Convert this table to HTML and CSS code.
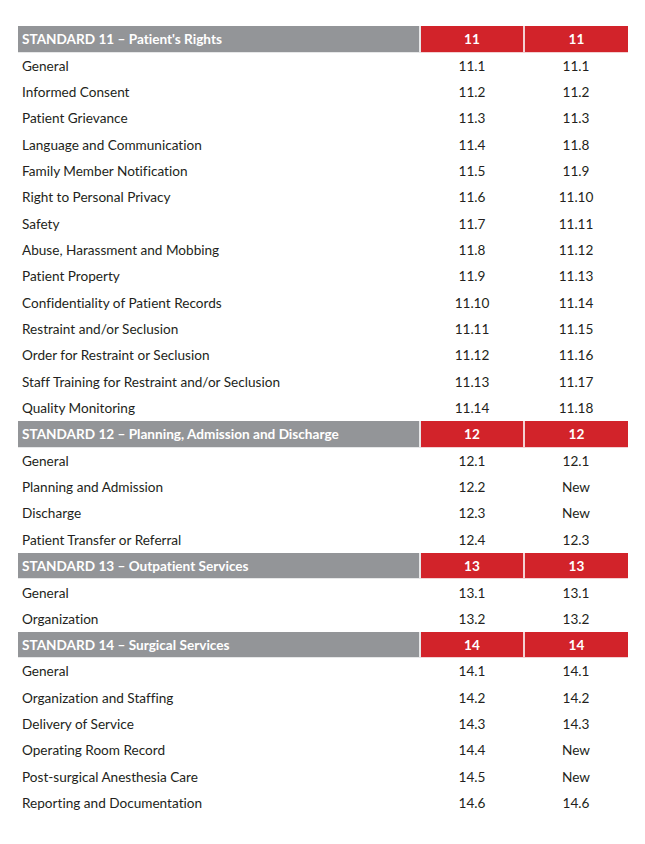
FILE: index.html
```html
<!DOCTYPE html>
<html lang="en">
<head>
<meta charset="utf-8">
<title>Standards</title>
<link rel="stylesheet" href="styles.css">
</head>
<body>
<table class="std">
  <tbody>
    <tr class="head"><td class="name">STANDARD 11 – Patient's Rights</td><td class="num">11</td><td class="num">11</td></tr>
    <tr><td class="name">General</td><td class="num">11.1</td><td class="num">11.1</td></tr>
    <tr><td class="name">Informed Consent</td><td class="num">11.2</td><td class="num">11.2</td></tr>
    <tr><td class="name">Patient Grievance</td><td class="num">11.3</td><td class="num">11.3</td></tr>
    <tr><td class="name">Language and Communication</td><td class="num">11.4</td><td class="num">11.8</td></tr>
    <tr><td class="name">Family Member Notification</td><td class="num">11.5</td><td class="num">11.9</td></tr>
    <tr><td class="name">Right to Personal Privacy</td><td class="num">11.6</td><td class="num">11.10</td></tr>
    <tr><td class="name">Safety</td><td class="num">11.7</td><td class="num">11.11</td></tr>
    <tr><td class="name">Abuse, Harassment and Mobbing</td><td class="num">11.8</td><td class="num">11.12</td></tr>
    <tr><td class="name">Patient Property</td><td class="num">11.9</td><td class="num">11.13</td></tr>
    <tr><td class="name">Confidentiality of Patient Records</td><td class="num">11.10</td><td class="num">11.14</td></tr>
    <tr><td class="name">Restraint and/or Seclusion</td><td class="num">11.11</td><td class="num">11.15</td></tr>
    <tr><td class="name">Order for Restraint or Seclusion</td><td class="num">11.12</td><td class="num">11.16</td></tr>
    <tr><td class="name">Staff Training for Restraint and/or Seclusion</td><td class="num">11.13</td><td class="num">11.17</td></tr>
    <tr><td class="name">Quality Monitoring</td><td class="num">11.14</td><td class="num">11.18</td></tr>
    <tr class="head"><td class="name">STANDARD 12 – Planning, Admission and Discharge</td><td class="num">12</td><td class="num">12</td></tr>
    <tr><td class="name">General</td><td class="num">12.1</td><td class="num">12.1</td></tr>
    <tr><td class="name">Planning and Admission</td><td class="num">12.2</td><td class="num">New</td></tr>
    <tr><td class="name">Discharge</td><td class="num">12.3</td><td class="num">New</td></tr>
    <tr><td class="name">Patient Transfer or Referral</td><td class="num">12.4</td><td class="num">12.3</td></tr>
    <tr class="head"><td class="name">STANDARD 13 – Outpatient Services</td><td class="num">13</td><td class="num">13</td></tr>
    <tr><td class="name">General</td><td class="num">13.1</td><td class="num">13.1</td></tr>
    <tr><td class="name">Organization</td><td class="num">13.2</td><td class="num">13.2</td></tr>
    <tr class="head"><td class="name">STANDARD 14 – Surgical Services</td><td class="num">14</td><td class="num">14</td></tr>
    <tr><td class="name">General</td><td class="num">14.1</td><td class="num">14.1</td></tr>
    <tr><td class="name">Organization and Staffing</td><td class="num">14.2</td><td class="num">14.2</td></tr>
    <tr><td class="name">Delivery of Service</td><td class="num">14.3</td><td class="num">14.3</td></tr>
    <tr><td class="name">Operating Room Record</td><td class="num">14.4</td><td class="num">New</td></tr>
    <tr><td class="name">Post-surgical Anesthesia Care</td><td class="num">14.5</td><td class="num">New</td></tr>
    <tr><td class="name">Reporting and Documentation</td><td class="num">14.6</td><td class="num">14.6</td></tr>
  </tbody>
</table>
</body>
</html>
```
FILE: styles.css
```css
html, body {
  margin: 0;
  padding: 0;
  background: #ffffff;
}

body {
  padding: 26px 17px 0 18px;
  font-family: Lato, "Liberation Sans", sans-serif;
  font-size: 13.6px;
  color: #231f20;
  font-variant-ligatures: none;
}

.std {
  width: 610px;
  border-collapse: collapse;
  table-layout: fixed;
}

.std td {
  height: 26.34px;
  padding: 2px 0 0 0;
  box-sizing: border-box;
  line-height: 1;
  vertical-align: middle;
  white-space: nowrap;
}

.std td.name {
  width: 402px;
  padding-left: 4px;
}

.std td.num {
  text-align: center;
}

.std td:nth-child(2) {
  width: 104px;
}

.std td:nth-child(3) {
  width: 104px;
}

.std tr.head td {
  font-weight: 700;
  color: #ffffff;
  border-right: 2px solid #f3d0d2;
  border-bottom: 1px solid #f3d0d2;
}

.std tr.head td.name {
  background: #939598;
  border-right-color: #e6e7e8;
  border-bottom-color: #e6e7e8;
}

.std tr.head td.num {
  background: #d2232a;
}

.std tr.head td:last-child {
  border-right: 0;
}
```
